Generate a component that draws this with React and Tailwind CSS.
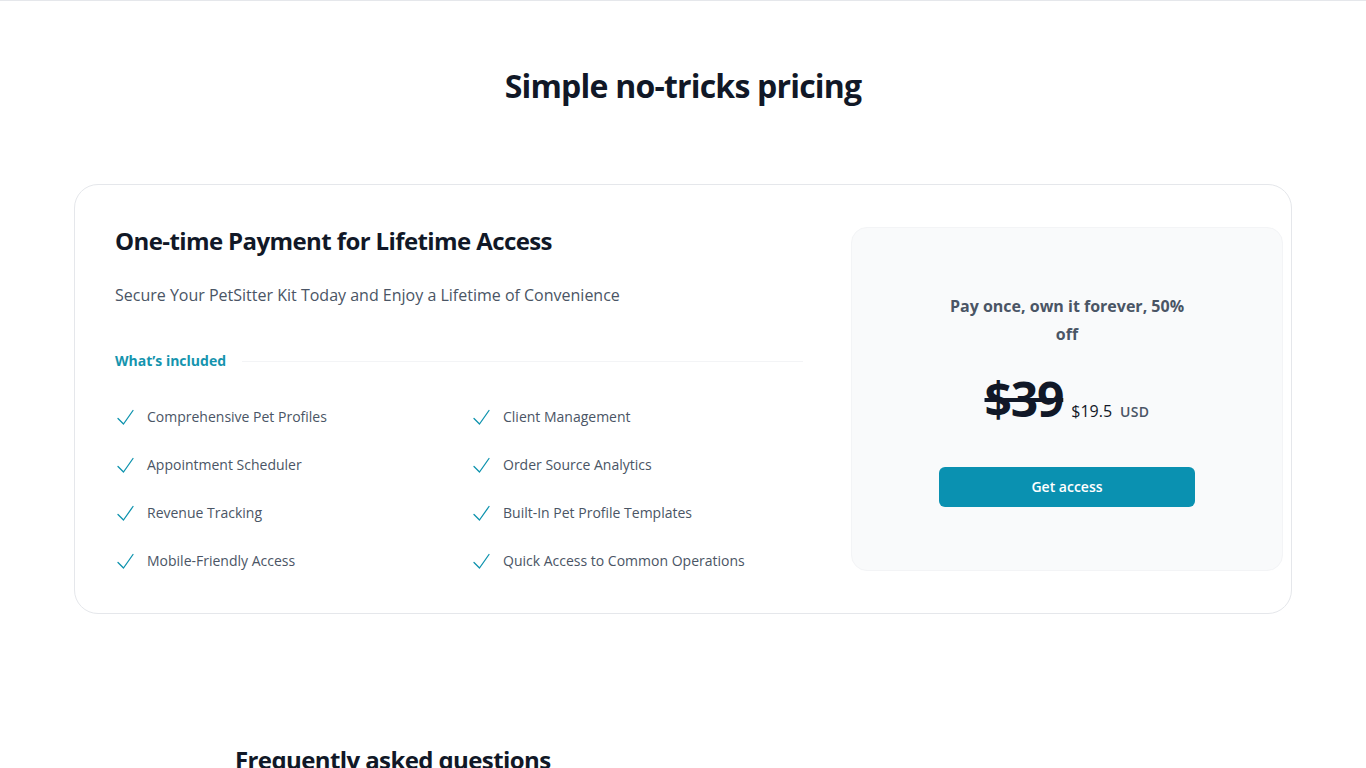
import React from 'react';

const features = [
  'Comprehensive Pet Profiles',
  'Client Management',
  'Appointment Scheduler',
  'Order Source Analytics',
  'Revenue Tracking',
  'Built-In Pet Profile Templates',
  'Mobile-Friendly Access',
  'Quick Access to Common Operations',
];

const CheckMark = () => (
  <svg viewBox="0 0 20 24" className="h-6 w-5 flex-none text-[#0e93ae]" fill="none" stroke="currentColor" strokeWidth="1.3" strokeLinecap="round" strokeLinejoin="round">
    <path d="M3 13.5 L8.5 19 L18 5.5" />
  </svg>
);

export default function App() {
  return (
    <div className="min-h-screen bg-white font-['Open_Sans',sans-serif] text-gray-900">
      <div className="border-t border-gray-200" />

      {/* Pricing */}
      <section className="pt-[65px]">
        <div className="mx-auto max-w-[1218px]">
          <h2 className="text-center text-[32px] font-bold leading-10 tracking-tight text-[#111827]">
            Simple no-tricks pricing
          </h2>

          <div className="mt-[78px] flex rounded-3xl border border-gray-200">
            {/* Left side */}
            <div className="flex-auto p-10">
              <h3 className="text-2xl font-bold tracking-tight text-[#111827]">
                One-time Payment for Lifetime Access
              </h3>
              <p className="mt-6 text-base leading-7 text-gray-600">
                Secure Your PetSitter Kit Today and Enjoy a Lifetime of Convenience
              </p>
              <div className="mt-10 flex items-center gap-x-4">
                <h4 className="flex-none text-sm font-bold leading-6 text-[#1594ae]">What’s included</h4>
                <div className="h-px flex-auto bg-gray-100" />
              </div>
              <ul className="mt-8 grid grid-cols-2 gap-6 text-sm leading-6 text-gray-600">
                {features.map((f) => (
                  <li key={f} className="flex gap-x-3">
                    <CheckMark />
                    {f}
                  </li>
                ))}
              </ul>
            </div>

            {/* Right side */}
            <div className="w-[448px] flex-none self-center p-2">
              <div className="rounded-2xl border border-gray-100 bg-gray-50 pb-[63px] pt-16 text-center">
                <div className="mx-auto max-w-xs px-8">
                  <p className="text-base font-bold leading-7 text-gray-600">
                    Pay once, own it forever, 50% off
                  </p>
                  <p className="mt-[27px] flex items-baseline justify-center gap-x-2">
                    <span className="text-5xl font-bold tracking-tight text-[#111827] line-through">$39</span>
                    <span className="text-base text-[#111827]">$19.5</span>
                    <span className="text-sm font-semibold leading-6 tracking-wide text-gray-600">USD</span>
                  </p>
                  <a
                    href="#"
                    className="mt-[43px] block w-full rounded-md bg-[#0a91b1] px-3 py-2.5 text-center text-sm font-semibold text-white"
                  >
                    Get access
                  </a>
                </div>
              </div>
            </div>
          </div>
        </div>
      </section>

      {/* FAQ */}
      <section className="mx-auto mt-[126px] max-w-4xl pb-24">
        <h2 className="text-2xl font-bold leading-10 tracking-tight text-[#111827]">
          Frequently asked questions
        </h2>
      </section>
    </div>
  );
}
